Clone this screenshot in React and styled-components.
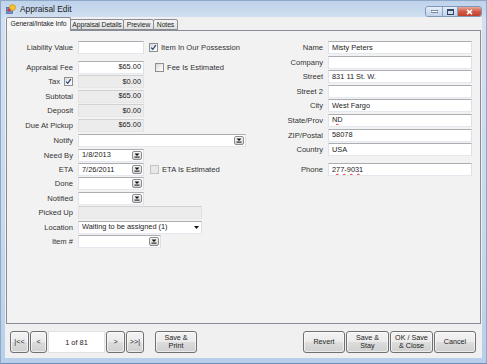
import React from "react";
import styled, { createGlobalStyle } from "styled-components";

const GlobalStyle = createGlobalStyle`
  html, body {
    margin: 0;
    padding: 0;
    background: #c9daee;
  }
  body {
    font-family: "Liberation Sans", Arial, sans-serif;
    color: #333;
  }
  * {
    box-sizing: border-box;
  }
`;

const Window = styled.div`
  width: 487px;
  height: 364px;
  display: flex;
  flex-direction: column;
  background: linear-gradient(#bed2ea, #d2e0f1 18px, #c9daee 60%, #b9cfe9);
  border: 1px solid #8ea8c9;
  border-bottom-color: #6f8fb8;
`;

const TitleBar = styled.div`
  height: 16px;
  display: flex;
  align-items: center;
  padding: 0 4px 0 5px;
`;

const Title = styled.span`
  font-size: 8.4px;
  color: #1b1b1b;
  margin-left: 4px;
  flex: 1;
`;

const WinButtons = styled.div`
  display: flex;
  align-self: flex-start;
  margin-top: 5px;
  border: 1px solid #7f97b9;
  border-radius: 3px;
  overflow: hidden;
`;

const WinBtn = styled.div`
  width: ${(p) => p.$w}px;
  height: 9px;
  display: flex;
  align-items: center;
  justify-content: center;
  background: ${(p) =>
    p.$close
      ? "linear-gradient(#e9a99b, #d25a44 50%, #c2402c)"
      : "linear-gradient(#e6eef8, #d2dff0 50%, #bfd1e8)"};
  border-left: ${(p) => (p.$first ? "none" : "1px solid #8aa2c2")};
`;

const Client = styled.div`
  flex: 1;
  margin: 0 4px 5px;
  background: #f0f0f0;
  display: flex;
  flex-direction: column;
  padding-top: 1px;
`;

const TabStrip = styled.div`
  height: 12px;
  display: flex;
  align-items: flex-end;
  padding-left: 1px;
  position: relative;
  z-index: 1;
`;

const Tab = styled.div`
  width: ${(p) => p.$w}px;
  height: ${(p) => (p.$active ? 14 : 11)}px;
  margin-bottom: ${(p) => (p.$active ? -1 : 0)}px;
  margin-left: ${(p) => (p.$active ? 0 : -1)}px;
  display: flex;
  align-items: center;
  justify-content: center;
  white-space: nowrap;
  overflow: hidden;
  font-size: 6.8px;
  letter-spacing: -0.1px;
  color: #1e1e1e;
  border: 1px solid #898c95;
  border-bottom: ${(p) => (p.$active ? "none" : "1px solid #898c95")};
  border-radius: 2px 2px 0 0;
  background: ${(p) =>
    p.$active ? "#f7f7f7" : "linear-gradient(#f3f3f3, #ebebeb 50%, #dedede)"};
  padding-bottom: ${(p) => (p.$active ? 2 : 0)}px;
`;

const TabPage = styled.div`
  height: 294px;
  margin: 0 1px;
  border: 1px solid #898c95;
  background: #f2f2f2;
  padding: 10px 0 0 0;
  display: flex;
  gap: 4px;
`;

const Column = styled.div`
  width: ${(p) => p.$w}px;
  display: flex;
  flex-direction: column;
  gap: ${(p) => p.$gap}px;
`;

const Row = styled.div`
  display: grid;
  grid-template-columns: ${(p) => p.$label}px 1fr;
  column-gap: 5px;
  align-items: center;
  height: 13px;
  margin-top: ${(p) => p.$mt || 0}px;
`;

const Label = styled.div`
  font-size: 7.6px;
  color: #333;
  text-align: right;
  white-space: nowrap;
  display: flex;
  justify-content: flex-end;
  align-items: center;
  gap: 4px;
`;

const Cell = styled.div`
  display: flex;
  align-items: center;
`;

const Box = styled.div`
  height: 13px;
  width: ${(p) => (p.$w ? `${p.$w}px` : "100%")};
  border: 1px solid;
  border-color: ${(p) =>
    p.$ro ? "#d2d2d2 #e2e2e2 #e6e6e6 #e2e2e2" : "#abadb3 #dbdfe6 #e3e9ef #e2e3ea"};
  background: ${(p) => (p.$ro ? "#ececec" : "#fff")};
  display: flex;
  align-items: center;
  padding: 0 1px 0 3px;
  font-size: 7.4px;
  color: #222;
`;

const BoxText = styled.span`
  flex: 1;
  white-space: nowrap;
  overflow: hidden;
  text-align: ${(p) => (p.$right ? "right" : "left")};
  padding-right: ${(p) => (p.$right ? 1 : 0)}px;
  padding-bottom: 1px;
`;

const Misspelled = styled.span`
  text-decoration: underline wavy #e03030;
  text-decoration-thickness: 1px;
  text-underline-offset: 1px;
`;

const DropBtn = styled.span`
  width: 10px;
  height: 9px;
  border: 1px solid #8c8c8c;
  border-radius: 2px;
  background: linear-gradient(#fafafa, #e6e6e6 50%, #d6d6d6);
  display: flex;
  align-items: center;
  justify-content: center;
`;

const ComboArrow = styled.span`
  width: 8px;
  display: flex;
  justify-content: center;
`;

const CheckWrap = styled.div`
  display: flex;
  align-items: center;
  gap: 3px;
  margin-left: ${(p) => p.$ml || 0}px;
  font-size: 7.6px;
  color: #333;
  white-space: nowrap;
`;

const CheckBox = styled.span`
  width: 9px;
  height: 9px;
  border: 1px solid ${(p) => (p.$disabled ? "#c4c4c4" : "#8e8f8f")};
  background: ${(p) =>
    p.$disabled
      ? "#e8e8e8"
      : "linear-gradient(135deg, #d8d8d8, #f6f6f6 70%, #fdfdfd)"};
  display: flex;
  align-items: center;
  justify-content: center;
`;

const Footer = styled.div`
  display: flex;
  align-items: flex-start;
  padding: 7px 6px 0 5px;
  gap: 1px;
`;

const Button = styled.div`
  width: ${(p) => p.$w}px;
  height: 22px;
  margin-left: ${(p) => p.$ml || 0}px;
  border: 1px solid #707070;
  border-radius: 3px;
  background: linear-gradient(#f3f3f3, #ebebeb 48%, #dddddd 52%, #cfcfcf);
  box-shadow: inset 0 0 0 1px rgba(255, 255, 255, 0.6);
  display: flex;
  align-items: center;
  justify-content: center;
  text-align: center;
  font-size: 7.2px;
  line-height: 1.12;
  color: #222;
`;

const PageBox = styled.div`
  width: 57px;
  height: 22px;
  background: #fff;
  border: 1px solid #e2e2e2;
  display: flex;
  align-items: center;
  justify-content: center;
  font-size: 7.4px;
  color: #222;
`;

const Spacer = styled.div`
  flex: 1;
`;

const AppIcon = () => (
  <svg width="10" height="10" viewBox="0 0 10 10">
    <rect x="0.5" y="3.5" width="6" height="6" fill="#6f8fc9" stroke="#3d5a95" strokeWidth="0.6" />
    <circle cx="6.5" cy="3.5" r="3" fill="#f4c430" stroke="#c48a10" strokeWidth="0.6" />
    <circle cx="3" cy="6" r="1.6" fill="#d63a2a" />
  </svg>
);

const Tick = () => (
  <svg width="7" height="7" viewBox="0 0 7 7">
    <polyline points="1.2,3.6 2.8,5.4 5.8,1.2" fill="none" stroke="#24407a" strokeWidth="1.2" />
  </svg>
);

const Down = () => (
  <svg width="6" height="5" viewBox="0 0 6 5">
    <polygon points="0.5,0.5 5.5,0.5 3,3" fill="#111" />
    <rect x="0.5" y="3.6" width="5" height="1" fill="#111" />
  </svg>
);

const SmallArrow = () => (
  <svg width="5" height="3" viewBox="0 0 5 3">
    <polygon points="0,0 5,0 2.5,3" fill="#111" />
  </svg>
);

const Check = ({ checked, disabled, label, ml }) => (
  <CheckWrap $ml={ml}>
    <CheckBox $disabled={disabled}>{checked && <Tick />}</CheckBox>
    {label && <span>{label}</span>}
  </CheckWrap>
);

const Field = ({ w, ro, right, children }) => (
  <Box $w={w} $ro={ro}>
    <BoxText $right={right}>{children}</BoxText>
  </Box>
);

const Picker = ({ w, children }) => (
  <Box $w={w}>
    <BoxText>{children}</BoxText>
    <DropBtn>
      <Down />
    </DropBtn>
  </Box>
);

const LeftRow = ({ label, mt, children }) => (
  <Row $label={66} $mt={mt}>
    <Label>{label}</Label>
    <Cell>{children}</Cell>
  </Row>
);

const RightRow = ({ label, mt, children }) => (
  <Row $label={73} $mt={mt}>
    <Label>{label}</Label>
    <Cell>{children}</Cell>
  </Row>
);

export default function App() {
  return (
    <>
      <GlobalStyle />
      <Window>
        <TitleBar>
          <AppIcon />
          <Title>Appraisal Edit</Title>
          <WinButtons>
            <WinBtn $w={16} $first>
              <svg width="7" height="3" viewBox="0 0 7 3">
                <rect x="0" y="0.5" width="7" height="2" fill="#fff" stroke="#33466a" strokeWidth="0.6" />
              </svg>
            </WinBtn>
            <WinBtn $w={15}>
              <svg width="7" height="6" viewBox="0 0 7 6">
                <rect x="0.5" y="0.5" width="6" height="5" fill="none" stroke="#33466a" strokeWidth="1" />
                <rect x="0.5" y="0.5" width="6" height="1.5" fill="#33466a" />
              </svg>
            </WinBtn>
            <WinBtn $w={24} $close>
              <svg width="7" height="6" viewBox="0 0 7 6">
                <path d="M1 0.8 L6 5.2 M6 0.8 L1 5.2" stroke="#fff" strokeWidth="1.6" />
              </svg>
            </WinBtn>
          </WinButtons>
        </TitleBar>

        <Client>
          <TabStrip>
            <Tab $w={65} $active>General/Intake Info</Tab>
            <Tab $w={54}>Appraisal Details</Tab>
            <Tab $w={31}>Preview</Tab>
            <Tab $w={25}>Notes</Tab>
          </TabStrip>

          <TabPage>
            <Column $w={239} $gap={1.45}>
              <LeftRow label="Liability Value">
                <Field w={66} />
                <Check checked label="Item In Our Possession" ml={5} />
              </LeftRow>
              <LeftRow label="Appraisal Fee" mt={5.5}>
                <Field w={66} right>$65.00</Field>
                <Check label="Fee Is Estimated" ml={11} />
              </LeftRow>
              <Row $label={66}>
                <Label>
                  <span>Tax</span>
                  <CheckBox>
                    <Tick />
                  </CheckBox>
                </Label>
                <Cell>
                  <Field w={66} ro right>$0.00</Field>
                </Cell>
              </Row>
              <LeftRow label="Subtotal">
                <Field w={66} ro right>$65.00</Field>
              </LeftRow>
              <LeftRow label="Deposit">
                <Field w={66} ro right>$0.00</Field>
              </LeftRow>
              <LeftRow label="Due At Pickup">
                <Field w={66} ro right>$65.00</Field>
              </LeftRow>
              <LeftRow label="Notify" mt={1}>
                <Picker />
              </LeftRow>
              <LeftRow label="Need By">
                <Picker w={66}>1/8/2013</Picker>
              </LeftRow>
              <LeftRow label="ETA">
                <Picker w={66}>7/26/2011</Picker>
                <Check disabled label="ETA Is Estimated" ml={6} />
              </LeftRow>
              <LeftRow label="Done">
                <Picker w={66} />
              </LeftRow>
              <LeftRow label="Notified">
                <Picker w={66} />
              </LeftRow>
              <LeftRow label="Picked Up">
                <Field w={124} ro />
              </LeftRow>
              <LeftRow label="Location">
                <Box $w={124}>
                  <BoxText>Waiting to be assigned (1)</BoxText>
                  <ComboArrow>
                    <SmallArrow />
                  </ComboArrow>
                </Box>
              </LeftRow>
              <LeftRow label="Item #">
                <Picker w={83} />
              </LeftRow>
            </Column>

            <Column $w={222} $gap={1.6}>
              <RightRow label="Name">
                <Field w={144}>Misty Peters</Field>
              </RightRow>
              <RightRow label="Company">
                <Field w={144} />
              </RightRow>
              <RightRow label="Street">
                <Field w={144}>831 11 St. W.</Field>
              </RightRow>
              <RightRow label="Street 2">
                <Field w={144} />
              </RightRow>
              <RightRow label="City">
                <Field w={144}>West Fargo</Field>
              </RightRow>
              <RightRow label="State/Prov">
                <Field w={144}>
                  <Misspelled>ND</Misspelled>
                </Field>
              </RightRow>
              <RightRow label="ZIP/Postal">
                <Field w={144}>58078</Field>
              </RightRow>
              <RightRow label="Country">
                <Field w={144}>USA</Field>
              </RightRow>
              <RightRow label="Phone" mt={5.5}>
                <Field w={144}>
                  <Misspelled>277-9031</Misspelled>
                </Field>
              </RightRow>
            </Column>
          </TabPage>

          <Footer>
            <Button $w={19}>|&lt;&lt;</Button>
            <Button $w={17}>&lt;</Button>
            <PageBox>1 of 81</PageBox>
            <Button $w={19}>&gt;</Button>
            <Button $w={18}>&gt;&gt;|</Button>
            <Button $w={42} $ml={10}>
              Save &amp;
              <br />
              Print
            </Button>
            <Spacer />
            <Button $w={42}>Revert</Button>
            <Button $w={43}>
              Save &amp;
              <br />
              Stay
            </Button>
            <Button $w={43}>
              OK / Save
              <br />
              &amp; Close
            </Button>
            <Button $w={42}>Cancel</Button>
          </Footer>
        </Client>
      </Window>
    </>
  );
}
